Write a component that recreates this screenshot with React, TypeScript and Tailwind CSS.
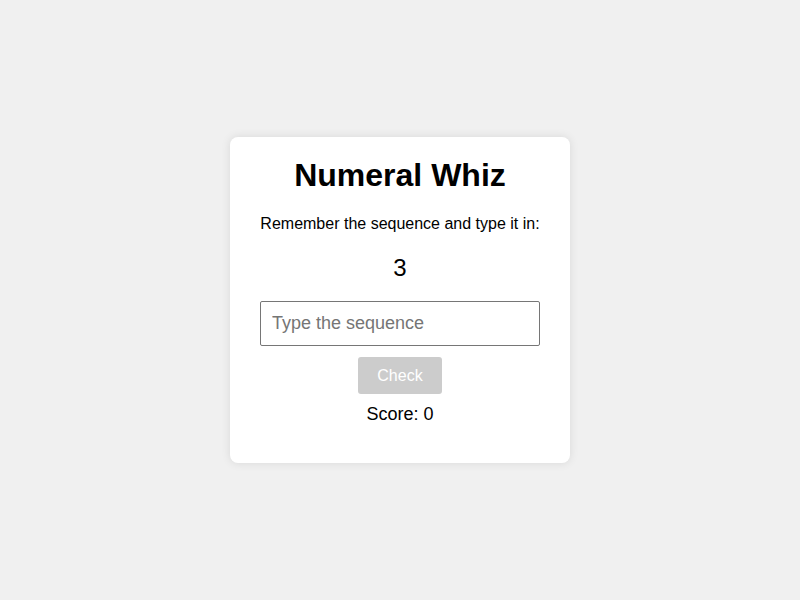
import React, { useState } from 'react';

const App: React.FC = () => {
  const [value, setValue] = useState('');
  const [score] = useState(0);

  return (
    <div className="min-h-screen bg-[#f0f0f0] flex items-center justify-center font-['Liberation_Sans',Arial,sans-serif] text-black">
      <div className="w-[340px] bg-white rounded-lg shadow-[0_0_10px_rgba(0,0,0,0.1)] px-[30px] pt-[20px] pb-[20px] flex flex-col items-center text-center">
        <h1 className="text-[32px] font-bold leading-[37px] mb-[21px]">Numeral Whiz</h1>
        <p className="text-[16px] leading-[18px] mb-[21px]">Remember the sequence and type it in:</p>
        <div className="text-[24px] leading-[28px] mb-[19px]">3</div>
        <input
          type="text"
          value={value}
          onChange={(e) => setValue(e.target.value)}
          placeholder="Type the sequence"
          className="w-full h-[45px] border border-[#767676] rounded-[2px] px-[11px] text-[18px] placeholder:text-[#757575] mb-[11px] outline-none"
        />
        <button
          disabled
          className="w-[84px] h-[37px] bg-[#cccccc] text-white text-[16px] rounded-[3px] mb-[10px]"
        >
          Check
        </button>
        <p className="text-[18px] leading-[21px] mb-[18px]">Score: {score}</p>
      </div>
    </div>
  );
};

export default App;
